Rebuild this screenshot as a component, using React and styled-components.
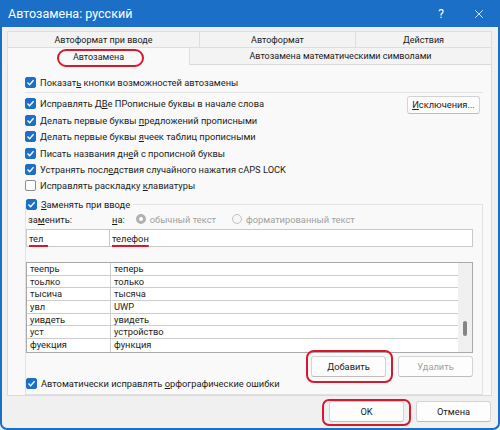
import React from "react";
import styled, { createGlobalStyle } from "styled-components";
import { X } from "lucide-react";

const BLUE = "#1b6fc6";
const RED = "#d8192b";
const FONT = `"Roboto", "Noto Sans", sans-serif`;

const Global = createGlobalStyle`
  html, body { margin: 0; padding: 0; background: #f0f0f0; }
  body { font-family: ${FONT}; font-size: 9.3px; color: #1b1b1b; }
  * { box-sizing: border-box; }
`;

const Window = styled.div`
  width: 500px;
  height: 430px;
  display: flex;
  flex-direction: column;
  background: #f0f0f0;
  border: 2px solid ${BLUE};
  border-top: none;
  border-radius: 0 0 7px 7px;
  overflow: hidden;
`;

const TitleBar = styled.div`
  height: 27px;
  flex: none;
  display: flex;
  align-items: center;
  background: ${BLUE};
  color: #fff;
  padding-left: 6px;
  font-size: 12.5px;
`;

const Title = styled.div`
  flex: 1;
`;

const Ctrl = styled.div`
  width: 38px;
  height: 27px;
  display: flex;
  align-items: center;
  justify-content: center;
  font-size: 12px;
`;

const Body = styled.div`
  flex: 1;
  display: flex;
  flex-direction: column;
  padding: 4px 6px 0 5px;
`;

const TabRow = styled.div`
  display: flex;
  height: ${(p) => p.$h}px;
  font-size: 9px;
`;

const Tab = styled.div`
  width: ${(p) => p.$w}px;
  display: flex;
  align-items: center;
  justify-content: center;
  background: ${(p) => (p.$active ? "#f9f9f9" : "#f3f3f3")};
  border: 1px solid #dedede;
  border-bottom: none;
  border-left: none;
  &:first-child { border-left: 1px solid #dedede; }
  ${(p) => p.$active && "position: relative; z-index: 1; margin-bottom: -1px;"}
`;

// red hand-drawn style marks laid over the screenshot
const Ring = styled.span`
  position: relative;
  display: inline-flex;
  &::after {
    content: "";
    position: absolute;
    inset: ${(p) => p.$inset};
    border: 2px solid ${RED};
    border-radius: ${(p) => p.$r || 8}px;
    pointer-events: none;
  }
`;

const Panel = styled.div`
  width: 485px;
  height: 332px;
  flex: none;
  display: flex;
  flex-direction: column;
  background: #f9f9f9;
  border: 1px solid #d9d9d9;
  padding: 10px 8px 0 17px;
`;

const CheckRow = styled.div`
  display: flex;
  align-items: center;
  gap: 4px;
  height: ${(p) => p.$h || 16}px;
  white-space: nowrap;
  ${(p) => p.$end && "align-self: flex-end;"}
`;

const Box = styled.span`
  width: 11px;
  height: 11px;
  flex: none;
  border-radius: 2px;
  display: flex;
  align-items: center;
  justify-content: center;
  background: ${(p) => (p.$on ? BLUE : "#fff")};
  border: 1px solid ${(p) => (p.$on ? BLUE : "#8b8b8b")};
`;

const U = styled.span`
  text-decoration: underline;
  text-underline-offset: 1px;
`;

const Separator = styled.div`
  height: 1px;
  background: #e3e3e3;
  margin: 1px 0 3px;
`;

const Options = styled.div`
  display: flex;
  justify-content: space-between;
  align-items: flex-start;
`;

const OptionList = styled.div`
  display: flex;
  flex-direction: column;
`;

const Btn = styled.button`
  width: ${(p) => p.$w || 75}px;
  height: ${(p) => p.$h || 21}px;
  font: inherit;
  padding: 0;
  background: #fdfdfd;
  border: 1px solid #d3d3d3;
  border-bottom-color: #bdbdbd;
  border-radius: 3px;
  color: ${(p) => (p.disabled ? "#a0a0a0" : "#1b1b1b")};
`;

const SideBtn = styled(Btn)`
  margin-right: 3px;
`;

const Group = styled.fieldset`
  margin: 2px 0 0;
  padding: 0 9px 5px 0;
  min-width: 0;
  border: 1px solid #e2e2e2;
`;

const Legend = styled.legend`
  padding: 0 3px 0 0;
  margin-left: 0;
`;

const LabelRow = styled.div`
  display: grid;
  grid-template-columns: 84px 1fr;
  height: 14px;
  align-items: center;
`;

const Label = styled.span`
  padding-left: 2px;
  color: ${(p) => p.$color || "inherit"};
`;

const RadioGroup = styled.div`
  display: flex;
  align-items: center;
  color: #a0a0a0;
`;

const Radio = styled.span`
  display: flex;
  align-items: center;
  gap: 4px;
  margin-left: ${(p) => p.$ml}px;
  &::before {
    content: "";
    width: 10px;
    height: 10px;
    border-radius: 50%;
    box-sizing: border-box;
    background: ${(p) => (p.$on ? "#fff" : "#f6f6f6")};
    border: ${(p) => (p.$on ? "3px solid #b0b0b0" : "1px solid #c2c2c2")};
  }
`;

const InputRow = styled.div`
  display: grid;
  grid-template-columns: 84px 1fr;
  margin-top: 3px;
  height: 18px;
`;

const Field = styled.div`
  display: flex;
  align-items: center;
  padding-left: 2px;
  background: #fff;
  border: 1px solid #c9c9c9;
  & + & { border-left: none; }
`;

const Marked = styled.span`
  text-decoration: underline ${RED} 2px;
  text-underline-offset: 3px;
`;

const Table = styled.div`
  margin-top: 15px;
  height: 91px;
  display: flex;
  background: #fff;
  border: 1px solid #a9a9a9;
`;

const Rows = styled.div`
  flex: 1;
  display: flex;
  flex-direction: column;
`;

const Row = styled.div`
  display: grid;
  grid-template-columns: 83px 1fr;
  height: 12.7px;
  border-bottom: 1px solid #cdcdcd;
  &:last-child { border-bottom: none; }
`;

const Cell = styled.div`
  padding-left: 3px;
  line-height: 11.7px;
  & + & { border-left: 1px solid #cdcdcd; }
`;

const ScrollTrack = styled.div`
  width: 14px;
  flex: none;
  background: #f0f0f0;
  display: flex;
  justify-content: center;
`;

const Thumb = styled.div`
  width: 4px;
  height: 15px;
  border-radius: 2px;
  background: #858585;
`;

const BottomArea = styled.div`
  margin-top: 3px;
  height: 33px;
  display: flex;
  justify-content: space-between;
`;

const BtnGroup = styled.div`
  display: flex;
  gap: 12px;
  align-self: flex-start;
`;

const Footer = styled.div`
  display: flex;
  justify-content: flex-end;
  gap: 12px;
  padding: 5px 1px 0 0;
`;

const Check = ({ on, h, end, children }) => (
  <CheckRow $h={h} $end={end}>
    <Box $on={on}>
      {on && (
        <svg width="9" height="9" viewBox="0 0 9 9">
          <path d="M1.5 4.6 L3.6 6.7 L7.6 2.2" fill="none" stroke="#fff" strokeWidth="1.4" />
        </svg>
      )}
    </Box>
    <span>{children}</span>
  </CheckRow>
);

const pairs = [
  ["теепрь", "теперь"],
  ["тоьлко", "только"],
  ["тысича", "тысяча"],
  ["увл", "UWP"],
  ["уивдеть", "увидеть"],
  ["уст", "устройство"],
  ["фуекция", "функция"],
];

export default function App() {
  return (
    <>
      <Global />
      <Window>
        <TitleBar>
          <Title>Автозамена: русский</Title>
          <Ctrl>?</Ctrl>
          <Ctrl>
            <X size={14} strokeWidth={1.4} />
          </Ctrl>
        </TitleBar>
        <Body>
          <TabRow $h={16}>
            <Tab $w={193}>Автоформат при вводе</Tab>
            <Tab $w={156}>Автоформат</Tab>
            <Tab $w={136}>Действия</Tab>
          </TabRow>
          <TabRow $h={17}>
            <Tab $w={183} $active>
              <Ring $inset="-3px -20px -5px -16px" $r={9}>Автозамена</Ring>
            </Tab>
            <Tab $w={302}>Автозамена математическими символами</Tab>
          </TabRow>
          <Panel>
            <Check on>
              Показат<U>ь</U> кнопки возможностей автозамены
            </Check>
            <Separator />
            <Options>
              <OptionList>
                <Check on h={16.4}>
                  Исправлять Д<U>В</U>е ПРописные буквы в начале слова
                </Check>
                <Check on h={16.4}>
                  Делать первые буквы <U>п</U>редложений прописными
                </Check>
                <Check on h={16.4}>
                  Делать первые буквы <U>я</U>чеек таблиц прописными
                </Check>
                <Check on h={16.4}>
                  Писать названия дн<U>е</U>й с прописной буквы
                </Check>
                <Check on h={16.4}>
                  Устранять посл<U>е</U>дствия случайного нажатия cAPS LOCK
                </Check>
                <Check h={16.4}>
                  Исправлять раскладку <U>к</U>лавиатуры
                </Check>
              </OptionList>
              <SideBtn $w={73} $h={18}>
                <U>И</U>сключения...
              </SideBtn>
            </Options>
            <Group>
              <Legend>
                <Check on>
                  <U>З</U>аменять при вводе
                </Check>
              </Legend>
              <LabelRow>
                <Label>
                  за<U>м</U>енить:
                </Label>
                <RadioGroup>
                  <Label $color="#1b1b1b">
                    <U>н</U>а:
                  </Label>
                  <Radio $on $ml={11}>обычный текст</Radio>
                  <Radio $ml={16}>форматированный текст</Radio>
                </RadioGroup>
              </LabelRow>
              <InputRow>
                <Field>
                  <Marked>тел&nbsp;&nbsp;</Marked>
                </Field>
                <Field>
                  <Marked>телефон</Marked>
                </Field>
              </InputRow>
              <Table>
                <Rows>
                  {pairs.map(([a, b]) => (
                    <Row key={a}>
                      <Cell>{a}</Cell>
                      <Cell>{b}</Cell>
                    </Row>
                  ))}
                </Rows>
                <ScrollTrack>
                  <Thumb style={{ marginTop: 58 }} />
                </ScrollTrack>
              </Table>
              <BottomArea>
                <Check on h={12} end>
                  Автоматически исправлять <U>о</U>рфографические ошибки
                </Check>
                <BtnGroup>
                  <Ring $inset="-6px -7px -6px -5px" $r={8}>
                    <Btn>
                      <U>Д</U>обавить
                    </Btn>
                  </Ring>
                  <Btn disabled>Удалить</Btn>
                </BtnGroup>
              </BottomArea>
            </Group>
          </Panel>
          <Footer>
            <Ring $inset="-2px -7px -4px -7px" $r={7}>
              <Btn>OK</Btn>
            </Ring>
            <Btn>Отмена</Btn>
          </Footer>
        </Body>
      </Window>
    </>
  );
}
